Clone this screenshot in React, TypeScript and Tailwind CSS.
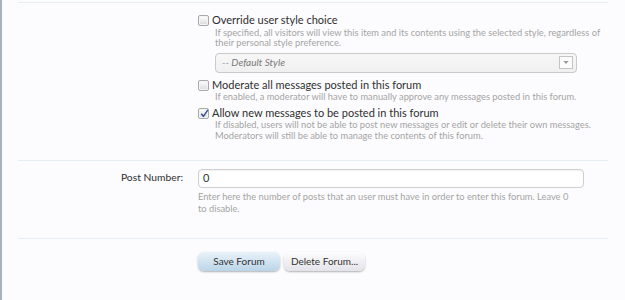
import React from "react";

function Box({ checked }: { checked?: boolean }) {
  return (
    <span className="relative mt-[1px] h-[11px] w-[11px] shrink-0 rounded-[2px] border border-[#a9a9a9] bg-gradient-to-b from-[#ffffff] to-[#dadada] shadow-[inset_0_0_0_1px_#f4f4f4]">
      {checked && (
        <svg viewBox="0 0 11 11" className="absolute left-[0px] top-[-1px] h-[11px] w-[11px]">
          <path d="M2.3 5.8 L4.4 8.3 L8.9 1.8" fill="none" stroke="#34488f" strokeWidth="1.4" />
        </svg>
      )}
    </span>
  );
}

function Check({ label, checked, children }: { label: string; checked?: boolean; children?: React.ReactNode }) {
  return (
    <div className="flex flex-col">
      <div className="flex items-start gap-[3px] h-[12px]">
        <Box checked={checked} />
        <span className="text-[11px] leading-[12px] text-[#2f2f2f]">{label}</span>
      </div>
      {children}
    </div>
  );
}

function Hint({ children, cls }: { children: React.ReactNode; cls?: string }) {
  return <div className={"text-[9.3px] leading-[10.5px] text-[#a4a4a4] " + (cls ?? "")}>{children}</div>;
}

export default function App() {
  return (
    <div className="h-[300px] w-[625px] overflow-hidden border-l-2 border-[#a6b2be] bg-[#fcfcfe] font-['Lato',sans-serif]">
      <div className="pt-[2px]">
        {/* Row 1 */}
        <div className="mx-[16px] mr-[17px] flex border-t border-[#e7eef3] pb-[18.5px] pt-[11px]">
          <div className="w-[168px] shrink-0" />
          <div className="ml-[12px] flex flex-col">
            <Check label="Override user style choice">
              <Hint cls="ml-[17px] mt-[1.5px] w-[392px]">
                If specified, all visitors will view this item and its contents using the selected style, regardless of their personal style preference.
              </Hint>
              <div className="ml-[17px] mt-[4px] flex h-[20px] w-[362px] items-center justify-between rounded-[4px] border border-[#c9c9c9] bg-gradient-to-b from-[#f7f7f7] to-[#f0f0f0] pl-[6px] pr-[3px]">
                <span className="text-[10px] italic text-[#7a7a7a]">-- Default Style</span>
                <span className="flex h-[13px] w-[14px] items-center justify-center border border-[#c4c4c4] bg-[#fcfcfc]">
                  <svg viewBox="0 0 7 4" className="h-[3px] w-[6px]">
                    <path d="M0 0 L7 0 L3.5 4 Z" fill="#9a9a9a" />
                  </svg>
                </span>
              </div>
            </Check>
            <div className="mt-[6px]">
              <Check label="Moderate all messages posted in this forum">
                <Hint cls="ml-[17px] mt-[1px]">
                  If enabled, a moderator will have to manually approve any messages posted in this forum.
                </Hint>
              </Check>
            </div>
            <div className="mt-[4.5px]">
              <Check label="Allow new messages to be posted in this forum" checked>
                <Hint cls="ml-[17px] mt-[1.5px] w-[392px]">
                  If disabled, users will not be able to post new messages or edit or delete their own messages. Moderators will still be able to manage the contents of this forum.
                </Hint>
              </Check>
            </div>
          </div>
        </div>
        {/* Row 2 */}
        <div className="mx-[16px] mr-[17px] flex border-t border-[#e7eef3] pb-[23.5px] pt-[8px]">
          <div className="flex h-[19px] w-[168px] shrink-0 items-center justify-end pr-[3px] text-[10.3px] text-[#2f2f2f]">
            Post Number:
          </div>
          <div className="ml-[12px] flex flex-col">
            <div className="flex h-[19px] w-[386px] items-center rounded-[4px] border border-[#cfcfcf] bg-white pl-[4px] text-[11px] text-[#333] shadow-[inset_0_1px_2px_rgba(0,0,0,0.06)]">
              0
            </div>
            <div className="mt-[3.5px] w-[377px] text-[9.3px] leading-[11.5px] text-[#a4a4a4]">
              Enter here the number of posts that an user must have in order to enter this forum. Leave 0 to disable.
            </div>
          </div>
        </div>
        {/* Row 3 */}
        <div className="mx-[16px] mr-[17px] flex border-t border-[#e7eef3] pt-[13px]">
          <div className="w-[168px] shrink-0" />
          <div className="ml-[12px] flex gap-[4px]">
            <button className="flex h-[19px] w-[82px] items-center justify-center rounded-[6px] bg-gradient-to-b from-[#e9f2f9] to-[#bad5e8] text-[10px] text-[#333] shadow-[0_1px_2px_rgba(0,0,0,0.3)]">
              Save Forum
            </button>
            <button className="flex h-[19px] w-[81px] items-center justify-center rounded-[6px] bg-gradient-to-b from-[#fdfdfe] to-[#e3e3ea] text-[10px] text-[#333] shadow-[0_1px_2px_rgba(0,0,0,0.3)]">
              Delete Forum...
            </button>
          </div>
        </div>
      </div>
    </div>
  );
}
